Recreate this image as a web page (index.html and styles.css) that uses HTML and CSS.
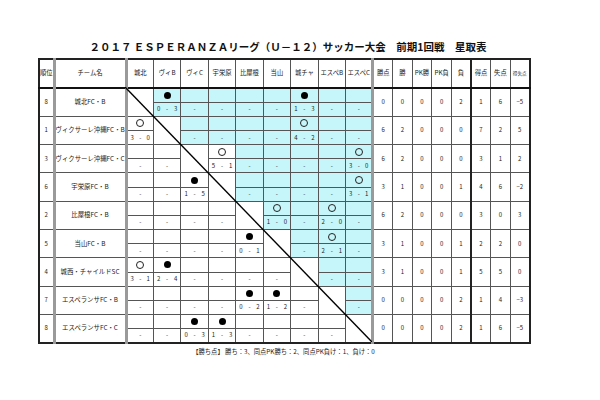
FILE: index.html
```html
<!DOCTYPE html>
<html lang="ja">
<head>
<meta charset="utf-8">
<title>星取表</title>
<link rel="stylesheet" href="styles.css">
</head>
<body>
<div class="sheet">
  <div class="title">２０１７ ＥＳＰＥＲＡＮＺＡリーグ（Ｕ－１２）サッカー大会　前期1回戦　星取表</div>
  <div class="wrap">
    <table class="hoshi">
      <colgroup>
        <col class="w-rank"><col class="w-name">
        <col class="w-m"><col class="w-m"><col class="w-m"><col class="w-m"><col class="w-m"><col class="w-m"><col class="w-m"><col class="w-m"><col class="w-m">
        <col class="w-s"><col class="w-s"><col class="w-s"><col class="w-s"><col class="w-s"><col class="w-s"><col class="w-s"><col class="w-s">
      </colgroup>
      <thead>
        <tr>
          <th>順位</th><th class="gl">チーム名</th>
          <th class="gl">城北</th><th>ヴィB</th><th>ヴィC</th><th>宇栄原</th><th>比屋根</th><th>当山</th><th>城チャ</th><th>エスペB</th><th class="gr">エスペC</th>
          <th>勝点</th><th>勝</th><th>PK勝</th><th>PK負</th><th class="br">負</th><th>得点</th><th>失点</th><th class="tiny">得失点</th>
        </tr>
      </thead>
      <tbody>
        <!-- 城北FC・B -->
        <tr class="top">
          <td rowspan="2">8</td><td rowspan="2" class="gl name">城北FC・B</td>
          <td rowspan="2" class="gl"></td>
          <td class="c"><span class="lose"></span></td><td class="c"></td><td class="c"></td><td class="c"></td><td class="c"></td><td class="c"><span class="lose"></span></td><td class="c"></td><td class="c gr"></td>
          <td rowspan="2">0</td><td rowspan="2">0</td><td rowspan="2">0</td><td rowspan="2">0</td><td rowspan="2" class="br">2</td><td rowspan="2">1</td><td rowspan="2">6</td><td rowspan="2">−5</td>
        </tr>
        <tr class="bot">
          <td class="c"><div class="score"><span>0</span><span>-</span><span>3</span></div></td><td class="c">-</td><td class="c">-</td><td class="c">-</td><td class="c">-</td><td class="c"><div class="score"><span>1</span><span>-</span><span>3</span></div></td><td class="c">-</td><td class="c gr">-</td>
        </tr>
        <!-- ヴィクサーレ沖縄FC・B -->
        <tr class="top">
          <td rowspan="2">1</td><td rowspan="2" class="gl name">ヴィクサーレ沖縄FC・B</td>
          <td class="gl"><span class="win"></span></td>
          <td rowspan="2"></td>
          <td class="c"></td><td class="c"></td><td class="c"></td><td class="c"></td><td class="c"><span class="win"></span></td><td class="c"></td><td class="c gr"></td>
          <td rowspan="2">6</td><td rowspan="2">2</td><td rowspan="2">0</td><td rowspan="2">0</td><td rowspan="2" class="br">0</td><td rowspan="2">7</td><td rowspan="2">2</td><td rowspan="2">5</td>
        </tr>
        <tr class="bot">
          <td class="gl"><div class="score"><span>3</span><span>-</span><span>0</span></div></td>
          <td class="c">-</td><td class="c">-</td><td class="c">-</td><td class="c">-</td><td class="c"><div class="score"><span>4</span><span>-</span><span>2</span></div></td><td class="c">-</td><td class="c gr">-</td>
        </tr>
        <!-- ヴィクサーレ沖縄FC・C -->
        <tr class="top">
          <td rowspan="2">3</td><td rowspan="2" class="gl name">ヴィクサーレ沖縄FC・C</td>
          <td class="gl"></td><td></td>
          <td rowspan="2"></td>
          <td><span class="win"></span></td><td class="c"></td><td class="c"></td><td class="c"></td><td class="c"></td><td class="c gr"><span class="win"></span></td>
          <td rowspan="2">6</td><td rowspan="2">2</td><td rowspan="2">0</td><td rowspan="2">0</td><td rowspan="2" class="br">0</td><td rowspan="2">3</td><td rowspan="2">1</td><td rowspan="2">2</td>
        </tr>
        <tr class="bot">
          <td class="gl">-</td><td>-</td>
          <td><div class="score"><span>5</span><span>-</span><span>1</span></div></td><td class="c">-</td><td class="c">-</td><td class="c">-</td><td class="c">-</td><td class="c gr"><div class="score"><span>3</span><span>-</span><span>0</span></div></td>
        </tr>
        <!-- 宇栄原FC・B -->
        <tr class="top">
          <td rowspan="2">6</td><td rowspan="2" class="gl name">宇栄原FC・B</td>
          <td class="gl"></td><td></td><td><span class="lose"></span></td>
          <td rowspan="2"></td>
          <td class="c"></td><td class="c"></td><td class="c"></td><td class="c"></td><td class="c gr"><span class="win"></span></td>
          <td rowspan="2">3</td><td rowspan="2">1</td><td rowspan="2">0</td><td rowspan="2">0</td><td rowspan="2" class="br">1</td><td rowspan="2">4</td><td rowspan="2">6</td><td rowspan="2">−2</td>
        </tr>
        <tr class="bot">
          <td class="gl">-</td><td>-</td><td><div class="score"><span>1</span><span>-</span><span>5</span></div></td>
          <td class="c">-</td><td class="c">-</td><td class="c">-</td><td class="c">-</td><td class="c gr"><div class="score"><span>3</span><span>-</span><span>1</span></div></td>
        </tr>
        <!-- 比屋根FC・B -->
        <tr class="top">
          <td rowspan="2">2</td><td rowspan="2" class="gl name">比屋根FC・B</td>
          <td class="gl"></td><td></td><td></td><td></td>
          <td rowspan="2"></td>
          <td class="c"><span class="win"></span></td><td class="c"></td><td class="c"><span class="win"></span></td><td class="c gr"></td>
          <td rowspan="2">6</td><td rowspan="2">2</td><td rowspan="2">0</td><td rowspan="2">0</td><td rowspan="2" class="br">0</td><td rowspan="2">3</td><td rowspan="2">0</td><td rowspan="2">3</td>
        </tr>
        <tr class="bot">
          <td class="gl">-</td><td>-</td><td>-</td><td>-</td>
          <td class="c"><div class="score"><span>1</span><span>-</span><span>0</span></div></td><td class="c">-</td><td class="c"><div class="score"><span>2</span><span>-</span><span>0</span></div></td><td class="c gr">-</td>
        </tr>
        <!-- 当山FC・B -->
        <tr class="top">
          <td rowspan="2">5</td><td rowspan="2" class="gl name">当山FC・B</td>
          <td class="gl"></td><td></td><td></td><td></td><td><span class="lose"></span></td>
          <td rowspan="2"></td>
          <td class="c"></td><td class="c"><span class="win"></span></td><td class="c gr"></td>
          <td rowspan="2">3</td><td rowspan="2">1</td><td rowspan="2">0</td><td rowspan="2">0</td><td rowspan="2" class="br">1</td><td rowspan="2">2</td><td rowspan="2">2</td><td rowspan="2">0</td>
        </tr>
        <tr class="bot">
          <td class="gl">-</td><td>-</td><td>-</td><td>-</td><td><div class="score"><span>0</span><span>-</span><span>1</span></div></td>
          <td class="c">-</td><td class="c"><div class="score"><span>2</span><span>-</span><span>1</span></div></td><td class="c gr">-</td>
        </tr>
        <!-- 城西・チャイルドSC -->
        <tr class="top">
          <td rowspan="2">4</td><td rowspan="2" class="gl name">城西・チャイルドSC</td>
          <td class="gl"><span class="win"></span></td><td><span class="lose"></span></td><td></td><td></td><td></td><td></td>
          <td rowspan="2"></td>
          <td class="c"></td><td class="c gr"></td>
          <td rowspan="2">3</td><td rowspan="2">1</td><td rowspan="2">0</td><td rowspan="2">0</td><td rowspan="2" class="br">1</td><td rowspan="2">5</td><td rowspan="2">5</td><td rowspan="2">0</td>
        </tr>
        <tr class="bot">
          <td class="gl"><div class="score"><span>3</span><span>-</span><span>1</span></div></td><td><div class="score"><span>2</span><span>-</span><span>4</span></div></td><td>-</td><td>-</td><td>-</td><td>-</td>
          <td class="c">-</td><td class="c gr">-</td>
        </tr>
        <!-- エスペランサFC・B -->
        <tr class="top">
          <td rowspan="2">7</td><td rowspan="2" class="gl name">エスペランサFC・B</td>
          <td class="gl"></td><td></td><td></td><td></td><td><span class="lose"></span></td><td><span class="lose"></span></td><td></td>
          <td rowspan="2"></td>
          <td class="c gr"></td>
          <td rowspan="2">0</td><td rowspan="2">0</td><td rowspan="2">0</td><td rowspan="2">0</td><td rowspan="2" class="br">2</td><td rowspan="2">1</td><td rowspan="2">4</td><td rowspan="2">−3</td>
        </tr>
        <tr class="bot">
          <td class="gl">-</td><td>-</td><td>-</td><td>-</td><td><div class="score"><span>0</span><span>-</span><span>2</span></div></td><td><div class="score"><span>1</span><span>-</span><span>2</span></div></td><td>-</td>
          <td class="c gr">-</td>
        </tr>
        <!-- エスペランサFC・C -->
        <tr class="top">
          <td rowspan="2">8</td><td rowspan="2" class="gl name">エスペランサFC・C</td>
          <td class="gl"></td><td></td><td><span class="lose"></span></td><td><span class="lose"></span></td><td></td><td></td><td></td><td></td>
          <td rowspan="2" class="gr"></td>
          <td rowspan="2">0</td><td rowspan="2">0</td><td rowspan="2">0</td><td rowspan="2">0</td><td rowspan="2" class="br">2</td><td rowspan="2">1</td><td rowspan="2">6</td><td rowspan="2">−5</td>
        </tr>
        <tr class="bot">
          <td class="gl">-</td><td>-</td><td><div class="score"><span>0</span><span>-</span><span>3</span></div></td><td><div class="score"><span>1</span><span>-</span><span>3</span></div></td><td>-</td><td>-</td><td>-</td><td>-</td>
        </tr>
      </tbody>
    </table>
    <svg class="diag" viewBox="0 0 247 255" preserveAspectRatio="none" aria-hidden="true">
      <line x1="0" y1="0" x2="247" y2="255" stroke="#000" stroke-width="1.4"/>
    </svg>
  </div>
  <div class="note">【勝ち点】 勝ち：3、同点PK勝ち：2、同点PK負け：1、負け：0</div>
</div>
</body>
</html>
```

FILE: styles.css
```css
html, body {
  margin: 0;
  padding: 0;
  background: #fff;
}

body {
  font-family: "Noto Sans CJK JP", "Noto Sans", "DejaVu Sans", sans-serif;
  color: #1a1a1a;
}

.sheet {
  width: 491px;
  margin-left: 38px;
  padding-top: 38px;
}

.title {
  height: 18px;
  line-height: 18px;
  padding-left: 9px;
  margin-bottom: 2px;
  text-align: center;
  font-size: 10.5px;
  font-weight: bold;
  white-space: nowrap;
  color: #111;
}

.wrap {
  position: relative;
}

.hoshi {
  width: 491px;
  table-layout: fixed;
  border-collapse: collapse;
  border: 2px solid #222;
}

.w-rank { width: 15px; }
.w-name { width: 72px; }
.w-m { width: 27.44px; }
.w-s { width: 19.62px; }

.hoshi th,
.hoshi td {
  border: 1px solid #555;
  padding: 0;
  text-align: center;
  vertical-align: middle;
  font-weight: normal;
  font-size: 6px;
  line-height: 1;
  overflow: hidden;
  white-space: nowrap;
}

.hoshi thead tr {
  height: 29px;
}

.hoshi thead th {
  border-bottom: 2px solid #111;
  font-size: 6.3px;
}

.hoshi thead th.tiny {
  font-size: 4.6px;
}

.hoshi tbody tr {
  height: 14.16px;
}

.hoshi td.name {
  font-size: 6.4px;
}

.hoshi .gl {
  border-left: 3px solid #9a9a9a;
}

.hoshi .gr {
  border-right: 3px solid #9a9a9a;
}

.hoshi .br {
  border-right: 2px solid #222;
}

.hoshi td.c {
  background: #c6f6f9;
}

.score {
  display: flex;
  justify-content: space-between;
  padding: 0 3px;
}

.win,
.lose {
  display: inline-block;
  border-radius: 50%;
  vertical-align: middle;
}

.win {
  width: 6px;
  height: 6px;
  border: 0.8px solid #222;
}

.lose {
  width: 7px;
  height: 7px;
  background: #000;
}

.diag {
  position: absolute;
  left: 87px;
  top: 29px;
  width: 247px;
  height: 255px;
  pointer-events: none;
}

.note {
  margin-top: 2px;
  height: 12px;
  line-height: 12px;
  text-align: center;
  font-size: 6.3px;
  white-space: nowrap;
}
```
